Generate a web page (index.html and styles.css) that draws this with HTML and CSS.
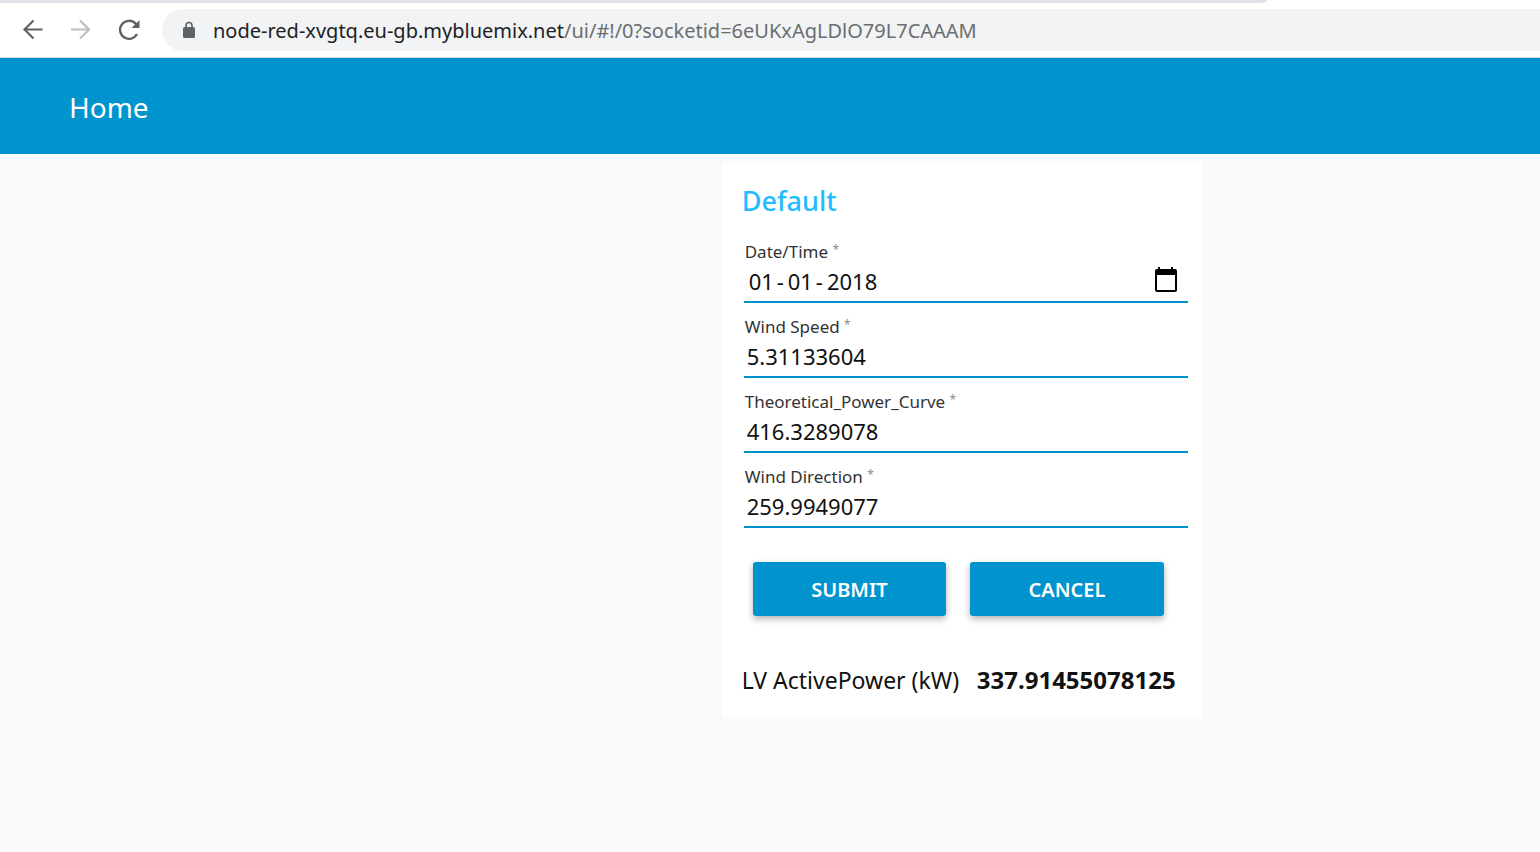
FILE: index.html
```html
<!DOCTYPE html>
<html lang="en">
<head>
<meta charset="utf-8">
<meta name="viewport" content="width=device-width, initial-scale=1">
<title>Home</title>
<link rel="stylesheet" href="styles.css">
</head>
<body>
<div class="browser">
  <div class="tab-strip"></div>
  <nav class="toolbar" aria-label="Browser">
    <button class="nav-button" type="button" aria-label="Back">
      <svg width="24" height="24" viewBox="0 0 24 24" fill="none" stroke="#5f6368" stroke-width="2.2"><path d="M21.500 11.500H3.500M12.500 2.500L3.500 11.500L12.500 20.500"/></svg>
    </button>
    <button class="nav-button" type="button" aria-label="Forward" disabled>
      <svg width="24" height="24" viewBox="0 0 24 24" fill="none" stroke="#bdbec0" stroke-width="2.2"><path d="M2 11.500H20M11 2.500L20 11.500L11 20.500"/></svg>
    </button>
    <button class="nav-button" type="button" aria-label="Reload">
      <svg width="24" height="24" viewBox="0 0 24 24"><path d="M20 16A9 9 0 1 1 18.6 5.6L20 7" fill="none" stroke="#5f6368" stroke-width="2.3"/><path d="M22.5 2V10H14.500Z" fill="#5f6368"/></svg>
    </button>
    <div class="address">
      <svg width="14" height="18" viewBox="0 0 14 18"><rect x="1" y="6" width="12" height="11" rx="1.5" fill="#5f6368"/><path d="M4 7V4.500A3 3 0 0 1 10 4.500V7" fill="none" stroke="#5f6368" stroke-width="1.600"/></svg>
      <span class="url"><span class="host">node-red-xvgtq.eu-gb.mybluemix.net</span>/ui/#!/0?socketid=6eUKxAgLDlO79L7CAAAM</span>
    </div>
  </nav>
</div>
<header class="header"><h1 class="header-title">Home</h1></header>
<main class="page">
  <section class="card">
    <h2 class="card-title">Default</h2>
    <form class="form">
      <div class="field">
        <label class="label" for="day">Date/Time <span class="required">*</span></label>
        <div class="control date" role="group" aria-label="Date/Time">
          <input class="date-part" id="day" type="text" value="01" aria-label="Day">
          <span class="date-separator">-</span>
          <input class="date-part" type="text" value="01" aria-label="Month">
          <span class="date-separator">-</span>
          <input class="date-part year" type="text" value="2018" aria-label="Year">
          <button class="picker" type="button" aria-label="Open calendar">
            <svg width="24" height="26" viewBox="0 0 24 26"><path fill-rule="evenodd" d="M4 0H6V2H17V0H19V2H21Q23 2 23 4V23Q23 25 21 25H3Q1 25 1 23V4Q1 2 3 2H4ZM3 8V23H21V8Z"/></svg>
          </button>
        </div>
      </div>
      <div class="field">
        <label class="label" for="speed">Wind Speed <span class="required">*</span></label>
        <input class="control" id="speed" type="text" value="5.31133604">
      </div>
      <div class="field">
        <label class="label" for="curve">Theoretical_Power_Curve <span class="required">*</span></label>
        <input class="control" id="curve" type="text" value="416.3289078">
      </div>
      <div class="field">
        <label class="label" for="direction">Wind Direction <span class="required">*</span></label>
        <input class="control" id="direction" type="text" value="259.9949077">
      </div>
      <div class="actions">
        <button class="action" type="button">SUBMIT</button>
        <button class="action" type="button">CANCEL</button>
      </div>
    </form>
    <p class="result"><span>LV ActivePower (kW)</span><strong class="value">337.91455078125</strong></p>
  </section>
</main>
</body>
</html>
```
FILE: styles.css
```css
* { box-sizing: border-box; }

body {
  margin: 0;
  background: #fafafa;
  color: #111;
  font-family: "Noto Sans", "Open Sans", sans-serif;
}

button, input {
  border: 0;
  padding: 0;
  background: none;
  color: inherit;
  font: inherit;
}

.browser {
  background: #fff;
  border-bottom: 1px solid #d9dde0;
}

.tab-strip {
  width: 82.3%;
  height: 3px;
  background: #dee1e6;
  border-bottom-right-radius: 6px 3px;
}

.toolbar {
  display: flex;
  align-items: center;
  gap: 24px;
  padding: 6px 0 6px 21px;
}

.nav-button {
  display: flex;
  width: 24px;
  height: 24px;
}

.address {
  display: flex;
  flex: 1;
  align-items: center;
  gap: 17px;
  height: 42px;
  margin-left: -3px;
  padding-left: 20px;
  background: #f1f3f4;
  border-radius: 21px 0 0 21px;
}

.url {
  padding-top: 2px;
  color: #6b6e71;
  font-size: 20px;
  line-height: 28px;
  white-space: nowrap;
}

.host { color: #202124; }

.header {
  padding: 31px 69px 29px;
  background: #0094ce;
  color: #fff;
}

.header-title {
  margin: 0;
  font-size: 28px;
  font-weight: 400;
  line-height: 36px;
}

.page {
  display: grid;
  grid-template-columns: 32fr 480px 15fr;
  padding-top: 9px;
}

.card {
  grid-column: 2;
  padding: 20px 14px 20px 20px;
  background: #fff;
}

.card-title {
  margin: 0 0 21px;
  color: #1fbcff;
  font-size: 27px;
  font-weight: 500;
  line-height: 36px;
}

.form { padding-left: 2px; }

.field {
  display: flex;
  flex-direction: column;
  margin-bottom: 12px;
}

.label {
  padding-left: 1px;
  color: #333;
  font-size: 17px;
  line-height: 24px;
}

.required {
  color: #8c8c8c;
  font-size: 12px;
  vertical-align: 4px;
  line-height: 12px;
}

.control {
  width: 100%;
  height: 39px;
  padding: 0 3px 3px;
  border-bottom: 2px solid #0094ce;
  font-size: 22px;
}

.date {
  display: flex;
  align-items: center;
  padding: 0 9px 3px 5px;
}

.date-part { width: 26px; }

.date-part.year { width: 52px; }

.date-separator { padding: 0 4px 0 2px; }

.picker {
  display: flex;
  margin: -2px 1px 0 auto;
}

.actions {
  display: grid;
  grid-template-columns: 1fr 1fr;
  gap: 24px;
  padding: 22px 24px 0 9px;
}

.action {
  height: 54px;
  padding-top: 1px;
  border-radius: 3px;
  background: #0094ce;
  box-shadow: 0 3px 7px rgba(0, 0, 0, 0.3);
  color: #fff;
  font-size: 20px;
  font-weight: 600;
}

.result {
  display: flex;
  align-items: baseline;
  justify-content: space-between;
  margin: 47px 0 0;
  padding-right: 12px;
  font-size: 23px;
  line-height: 34px;
}

.value { font-size: 24px; }
```
